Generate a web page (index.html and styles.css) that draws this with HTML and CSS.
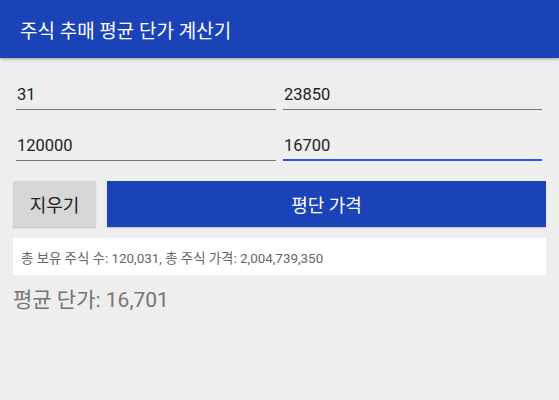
FILE: index.html
```html
<!DOCTYPE html>
<html lang="ko">
<head>
<meta charset="utf-8">
<link rel="stylesheet" href="styles.css">
</head>
<body>
<header class="appbar"><span class="title">주식 추매 평균 단가 계산기</span></header>
<main class="content">
  <div class="grid">
    <div class="field"><span class="val">31</span></div>
    <div class="field"><span class="val">23850</span></div>
    <div class="field"><span class="val">120000</span></div>
    <div class="field focus"><span class="val">16700</span></div>
  </div>
  <div class="buttons">
    <div class="btn clear">지우기</div>
    <div class="btn calc">평단 가격</div>
  </div>
  <div class="summary">총 보유 주식 수: 120,031, 총 주식 가격: 2,004,739,350</div>
  <div class="result">평균 단가: 16,701</div>
</main>
</body>
</html>
```
FILE: styles.css
```css
html, body { margin: 0; padding: 0; }
body {
  width: 559px; height: 400px; overflow: hidden;
  background: #eeeeee;
  font-family: Roboto, "Noto Sans CJK KR", sans-serif;
}
.appbar {
  height: 58px;
  background: #1a43b8;
  box-shadow: 0 1px 3px rgba(0,0,0,0.35);
  display: flex; align-items: center;
  padding-left: 20px;
  position: relative;
}
.title { color: #fff; font-size: 19px; }
.content { padding: 0 13px 0 13px; }
.grid {
  display: grid;
  grid-template-columns: 260px 259px;
  column-gap: 7px;
  row-gap: 11px;
  padding: 12px 4px 0 3px;
}
.field {
  height: 40px;
  border-bottom: 1px solid #757575;
  display: flex; align-items: flex-end;
  padding-bottom: 3px;
  box-sizing: border-box;
}
.field.focus { border-bottom: 2px solid #2a5ae0; padding-bottom: 2px; }
.val { font-size: 16.5px; color: #222; padding-left: 1px; line-height: 22px; }
.buttons {
  display: flex; gap: 11px;
  margin-top: 20px;
  height: 46px;
}
.btn {
  display: flex; align-items: center; justify-content: center;
  font-size: 18px;
  box-shadow: 0 1px 1px rgba(0,0,0,0.15);
}
.clear { width: 83px; background: #d6d7d7; color: #222; }
.calc { flex: 1; background: #1a43b8; color: #fff; }
.summary {
  margin-top: 11px;
  height: 37px;
  background: #fff;
  display: flex; align-items: center;
  padding-left: 8px;
  font-size: 13.4px; color: #666;
}
.result {
  margin-top: 8px;
  font-size: 21px; color: #757575;
}
```
